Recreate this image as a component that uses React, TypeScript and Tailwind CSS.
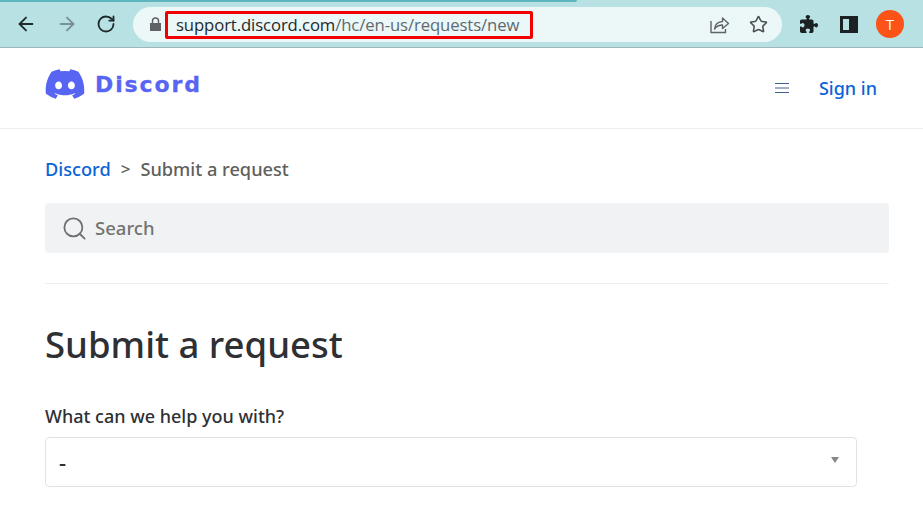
import { FaDiscord, FaPuzzlePiece } from "react-icons/fa6";
import { ArrowLeft, ArrowRight, RotateCw, Search, Star } from "lucide-react";

function ShareIcon() {
  return (
    <svg width="20" height="20" viewBox="0 0 20 20" fill="none" stroke="#5f6368" strokeWidth="1.4">
      <path d="M1 7v11.500h14.500V15" />
      <path d="M4.500 15c.6-4.500 3.600-7.300 8-7.500V4l6 5.500-6 5V11c-3.300 0-6 1.300-8 4z" strokeLinejoin="round" />
    </svg>
  );
}

function Toolbar() {
  return (
    <div className="h-[48px] bg-[#b8e1e4] border-b border-[#9fb6ba] relative font-['Open_Sans',sans-serif]">
      <div className="absolute left-0 top-0 w-[577px] h-[2px] bg-[#5fb5bd] rounded-br-sm" />
      <div className="flex items-center h-full pt-[1px]">
        <div className="w-[133px] flex items-center shrink-0 pl-[15px] gap-[19px]">
          <ArrowLeft size={22} strokeWidth={2} color="#1f2a2c" />
          <ArrowRight size={22} strokeWidth={2} color="#7d8f92" />
          <RotateCw size={20} strokeWidth={2.200} color="#1f2a2c" className="-ml-[1px]" />
        </div>
        <div className="w-[649px] h-[35px] bg-[#ecf7f8] rounded-full flex items-center shrink-0">
          <svg className="ml-[17px] shrink-0" width="11" height="14" viewBox="0 0 11 14" fill="#5f6368">
            <path d="M0 6h11v8H0z" />
            <path d="M2.500 6V4a3 3 0 0 1 6 0v2" fill="none" stroke="#5f6368" strokeWidth="1.500" />
          </svg>
          <div className="ml-[4px] w-[368px] h-[28px] border-[3px] border-[#f00000] rounded-[2px] flex items-center pl-[8px] text-[16.700px] tracking-[-0.1px] whitespace-nowrap mt-[1px]">
            <span className="text-[#1f2a2c]">support.discord.com</span>
            <span className="text-[#5c6a70]">/hc/en-us/requests/new</span>
          </div>
          <div className="ml-auto flex items-center gap-[19px] pr-[14px]">
            <ShareIcon />
            <Star size={19} strokeWidth={2} color="#4a5053" />
          </div>
        </div>
        <div className="flex items-center pl-[18px] gap-[22px]">
          <FaPuzzlePiece size={18} color="#1c2123" />
          <div className="w-[18px] h-[17px] border-[3px] border-[#1c2123] flex justify-end">
            <div className="w-[6px] bg-[#1c2123]" />
          </div>
          <div className="w-[28px] h-[28px] rounded-full bg-[#fb5318] flex items-center justify-center text-white text-[15px] -ml-[4px]">
            T
          </div>
        </div>
      </div>
    </div>
  );
}

function Header() {
  return (
    <div className="h-[81px] border-b border-[#eeeeee] flex items-center px-[45px] pb-[1px]">
      <div className="flex items-center gap-[9px] mb-[7px] -ml-[1px]">
        <FaDiscord size={42} color="#5865f2" />
        <span className="font-['DejaVu_Sans',sans-serif] font-bold text-[22px] leading-none tracking-[1.900px] pt-[1px] text-[#5865f2] [-webkit-text-stroke:0.3px_#5865f2]">Discord</span>
      </div>
      <div className="ml-auto flex items-center gap-[30px] pr-[1px] pt-[1px]">
        <svg width="14" height="10" viewBox="0 0 14 10" stroke="#3f5f8c" strokeWidth="1">
          <path d="M0 .5h14M0 5h14M0 9.500h14" />
        </svg>
        <a className="text-[#0b63d8] text-[18px] font-medium">Sign in</a>
      </div>
    </div>
  );
}

export default function App() {
  return (
    <div className="w-[923px] h-[510px] overflow-hidden bg-white font-['Noto_Sans',sans-serif]">
      <Toolbar />
      <Header />
      <div className="px-[45px]">
        <div className="pt-[27px] flex items-center text-[18.200px] leading-[26px] font-medium text-[#60605c]">
          <a className="text-[#0b63d8]">Discord</a>
          <span className="mx-[10px] text-[17px]">&gt;</span>
          <span>Submit a request</span>
        </div>
        <div className="mt-[21px] w-[844px] h-[50px] rounded-[4px] bg-[#f1f2f4] flex items-center pl-[16px]">
          <Search size={27} strokeWidth={1.600} color="#6d7073" />
          <span className="ml-[7px] text-[18.500px] font-medium text-[#73736f]">Search</span>
        </div>
        <div className="mt-[30px] w-[844px] border-t border-[#eeeeee]" />
        <h1 className="mt-[35px] text-[36.500px] leading-[50px] font-medium text-[#2e3033]">Submit a request</h1>
        <div className="mt-[34px] text-[18px] leading-[26px] font-medium text-[#2e3033]">What can we help you with?</div>
        <div className="mt-[8px] w-[812px] h-[50px] border border-[#dfe3e8] rounded-[4px] flex items-center pl-[13px] pr-[17px]">
          <span className="text-[22px] font-medium text-[#2e3033]">-</span>
          <span className="ml-auto mb-[5px] w-0 h-0 border-x-[4px] border-x-transparent border-t-[6px] border-t-[#85888b]" />
        </div>
      </div>
    </div>
  );
}
